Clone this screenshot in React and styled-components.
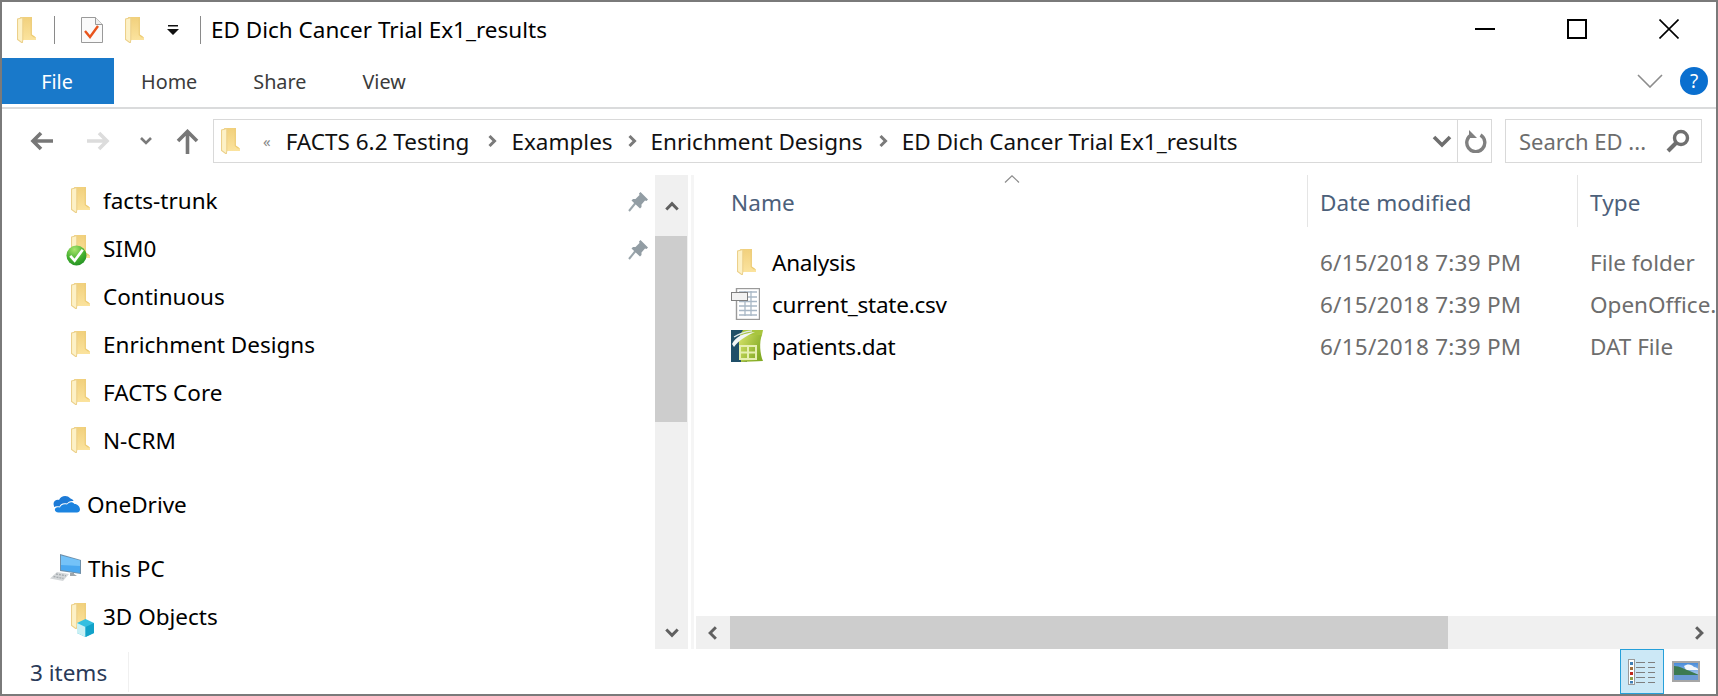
import React from 'react';
import styled, { createGlobalStyle } from 'styled-components';

const Global = createGlobalStyle`
    html, body { margin: 0; padding: 0; background: #fff; }
    body { font-family: "Noto Sans", "Open Sans", sans-serif; }
    * { box-sizing: border-box; }
`

const Win = styled.div`
    width: 1718px;
    height: 696px;
    border: 2px solid #7a7a7a;
    display: flex;
    flex-direction: column;
    overflow: hidden;
    background: #fff;
    color: #000;
`

const TitleBar = styled.div`
    height: 56px;
    display: flex;
    align-items: center;
    flex: none;
    padding-right: 1px;
`

const QuickIcons = styled.div`
    display: flex;
    align-items: center;
    padding-left: 15px;
`

const Gap = styled.div`
    width: ${p => p.$w}px;
    flex: none;
`

const TitleSep = styled.div`
    width: 1px;
    height: 28px;
    background: #8a8a8a;
    margin-left: ${p => p.$left}px;
`

const Title = styled.div`
    font-size: 22.5px;
    margin-left: 10px;
    flex: 1;
    position: relative;
    top: -1px;
`

const WinButton = styled.div`
    width: 92px;
    height: 56px;
    display: flex;
    align-items: center;
    justify-content: center;
    position: relative;
    top: -1px;
`

const Ribbon = styled.div`
    height: 51px;
    flex: none;
    display: flex;
    border-bottom: 2px solid #dadbdc;
    padding-bottom: 3px;
`

const FileTab = styled.div`
    width: 112px;
    background: #1979ca;
    color: #fff;
    font-size: 19.8px;
    display: flex;
    align-items: center;
    justify-content: center;
    padding-right: 2px;
`

const Tab = styled.div`
    font-size: 19.8px;
    color: #3b3b3b;
    display: flex;
    align-items: center;
    margin-left: ${p => p.$left}px;
`

const RibbonRight = styled.div`
    margin-left: auto;
    display: flex;
    align-items: center;
    gap: 17px;
    padding-right: 8px;
`

const HelpBadge = styled.div`
    width: 28px;
    height: 28px;
    border-radius: 50%;
    background: #0a6fcf;
    color: #fff;
    font-size: 19px;
    display: flex;
    align-items: center;
    justify-content: center;
`

const NavBar = styled.div`
    height: 66px;
    flex: none;
    display: flex;
    align-items: flex-start;
    padding-top: 10px;
    padding-right: 12px;
`

const NavButtons = styled.div`
    width: 211px;
    height: 44px;
    display: flex;
    align-items: center;
    padding-left: 28px;
`

const AddressBox = styled.div`
    width: 1279px;
    height: 44px;
    border: 1px solid #d9d9d9;
    display: flex;
    align-items: center;
    padding-left: 7px;
`

const Crumbs = styled.div`
    flex: 1;
    display: flex;
    align-items: center;
    font-size: 22.5px;
    color: #111;
    min-width: 0;
`

const Crumb = styled.span`
    white-space: nowrap;
`

const Overflow = styled.span`
    margin: 0 15px 0 23px;
    font-size: 15px;
    color: #888;
`

const CrumbSep = styled.span`
    display: flex;
    margin: 0 12px 0 ${p => p.$left}px;
`

const DropArrow = styled.span`
    display: flex;
    margin-right: 5px;
`

const RefreshBox = styled.div`
    width: 34px;
    height: 42px;
    border-left: 1px solid #d9d9d9;
    display: flex;
    align-items: center;
    justify-content: center;
    padding-left: 3px;
`

const SearchBox = styled.div`
    width: 197px;
    height: 44px;
    margin-left: 13px;
    border: 1px solid #d9d9d9;
    display: flex;
    align-items: center;
    justify-content: space-between;
    padding: 0 11px 0 13px;
    font-size: 22px;
    color: #6d6d6d;
`

const Body = styled.div`
    flex: 1;
    display: flex;
    min-height: 0;
`

const Side = styled.div`
    width: 653px;
    flex: none;
    position: relative;
    overflow: hidden;
    padding-top: 1px;
`

const SideRow = styled.div`
    height: 48px;
    display: flex;
    align-items: center;
    font-size: 22.5px;
    padding-left: ${p => p.$left}px;
    margin-top: ${p => p.$top || 0}px;
    position: relative;
`

const SideIcon = styled.div`
    width: ${p => p.$w}px;
    display: flex;
    position: relative;
    flex: none;
`

const PinWrap = styled.div`
    position: absolute;
    left: 626px;
    top: 12px;
`

const CheckWrap = styled.div`
    position: absolute;
    left: -5px;
    top: 7px;
`

const CubeWrap = styled.div`
    position: absolute;
    left: 6px;
    top: 10px;
`

const VScroll = styled.div`
    width: 33px;
    flex: none;
    background: #f0f0f0;
    display: flex;
    flex-direction: column;
`

const ScrollBtn = styled.div`
    height: ${p => p.$h}px;
    flex: none;
    display: flex;
    align-items: center;
    justify-content: center;
`

const VThumb = styled.div`
    height: 186px;
    flex: none;
    width: 32px;
    background: #cdcdcd;
`

const Spacer = styled.div`
    flex: 1;
`

const Divider = styled.div`
    width: 3px;
    margin-left: 3px;
    flex: none;
    background: #f5f5f5;
`

const Content = styled.div`
    flex: 1;
    min-width: 0;
    display: flex;
    flex-direction: column;
    margin-left: 2px;
`

const ListArea = styled.div`
    flex: 1;
    overflow: hidden;
    position: relative;
`

const SortCaret = styled.div`
    position: absolute;
    left: 308px;
    top: 0;
    display: flex;
`

const HeadRow = styled.div`
    display: grid;
    grid-template-columns: 612px 270px 200px;
    height: 52px;
`

const HeadCell = styled.div`
    font-size: 22.5px;
    letter-spacing: 0.1px;
    color: #4c607a;
    padding-left: ${p => p.$left}px;
    border-right: ${p => p.$line ? '1px solid #e5e5e5' : 'none'};
    display: flex;
    align-items: center;
    padding-top: 2px;
`

const Rows = styled.div`
    padding-top: 14px;
`

const Row = styled.div`
    display: grid;
    grid-template-columns: 612px 270px 1fr;
    height: 42px;
    align-items: center;
    font-size: 22.5px;
    white-space: nowrap;
`

const NameCell = styled.div`
    display: flex;
    align-items: center;
    padding-left: 35px;
    letter-spacing: -0.25px;
`

const RowIcon = styled.div`
    width: 41px;
    flex: none;
    display: flex;
    padding-left: ${p => p.$pad || 0}px;
`

const MutedCell = styled.div`
    color: #6d6d6d;
    padding-left: 12px;
    letter-spacing: ${p => p.$spacing}px;
`

const HScroll = styled.div`
    height: 33px;
    flex: none;
    background: #f0f0f0;
    display: flex;
`

const HBtn = styled.div`
    width: 34px;
    flex: none;
    display: flex;
    align-items: center;
    justify-content: center;
`

const HThumb = styled.div`
    width: 718px;
    flex: none;
    background: #cdcdcd;
`

const StatusBar = styled.div`
    height: 45px;
    flex: none;
    display: flex;
    align-items: stretch;
    font-size: 22.5px;
    color: #2a3a58;
    padding-right: 8px;
`

const StatusText = styled.div`
    width: 127px;
    padding-left: 28px;
    display: flex;
    align-items: center;
    height: 40px;
    margin-top: 3px;
    border-right: 1px solid #f0f0f0;
`

const ViewButton = styled.div`
    width: 44px;
    height: 45px;
    display: flex;
    align-items: center;
    justify-content: center;
    background: ${p => p.$on ? '#cce8f6' : 'transparent'};
    border: ${p => p.$on ? '1px solid #26a0da' : 'none'};
`

function Folder() {
    return (
        <svg width="19" height="26" viewBox="0 0 18 26" preserveAspectRatio="none">
            <defs>
                <linearGradient id="fb" x1="0" y1="0" x2="0" y2="1">
                    <stop offset="0" stopColor="#f1d07c" />
                    <stop offset="1" stopColor="#fbe39e" />
                </linearGradient>
            </defs>
            <path d="M3 0H14V17.5L18 20.5V23H3Z" fill="url(#fb)" />
            <path d="M14 0V17.5L18 20.5H16L13 18V0Z" fill="#eccb74" />
            <path d="M0.5 2L5.5 0.5V23L5 26L0.5 22.5Z" fill="#fdf1c6" stroke="#ecd08a" strokeWidth="1" />
        </svg>
    );
}

function Check() {
    return (
        <svg width="21" height="21" viewBox="0 0 22 22">
            <defs>
                <radialGradient id="gc" cx="0.4" cy="0.2" r="0.9">
                    <stop offset="0" stopColor="#a9e56d" />
                    <stop offset="0.55" stopColor="#45b02f" />
                    <stop offset="1" stopColor="#1c8a22" />
                </radialGradient>
            </defs>
            <circle cx="11" cy="11" r="10.5" fill="url(#gc)" />
            <path d="M4.5 11.5L9 16.5L17.5 5" fill="none" stroke="#fff" strokeWidth="2.8" />
        </svg>
    );
}

function Pin() {
    return (
        <svg width="21" height="21" viewBox="0 0 21 21">
            <path d="M1 20L7.5 12" stroke="#9aa5ab" strokeWidth="2" />
            <path d="M12.5 1L20 8.5L18.5 10L17 9.5L13.5 13.5L13.5 16L12 17.5L3.5 9.5L5 8L7.5 8L11.5 4L11 2.5Z" fill="#929da4" />
        </svg>
    );
}

function Chevron({ dir = 'down', size = 14, color = '#606060', sw = 2.6 }) {
    const d = { down: 'M2 4L7 9L12 4', up: 'M2 10L7 5L12 10', left: 'M9.5 2L4.5 7L9.5 12', right: 'M4.5 2L9.5 7L4.5 12' }[dir];
    return (
        <svg width={size} height={size} viewBox="0 0 14 14">
            <path d={d} fill="none" stroke={color} strokeWidth={sw} />
        </svg>
    );
}

function Arrow({ dir = 'left', color = '#777' }) {
    if (dir === 'up') {
        return (
            <svg width="23" height="25" viewBox="0 0 23 25">
                <path d="M11.5 25V3M2 12L11.5 2.5L21 12" fill="none" stroke={color} strokeWidth="3.6" />
            </svg>
        );
    }
    const d = dir === 'left' ? 'M23 10H3M11 2L3 10L11 18' : 'M0 10H20M12 2L20 10L12 18';
    return (
        <svg width="23" height="20" viewBox="0 0 23 20">
            <path d={d} fill="none" stroke={color} strokeWidth="3.6" />
        </svg>
    );
}

function CsvIcon() {
    return (
        <svg width="29" height="32" viewBox="0 0 29 32">
            <rect x="5.5" y="0.5" width="23" height="31" fill="#fff" stroke="#9a9a9a" strokeWidth="1.4" />
            <path d="M8 4H26M8 9H26M8 13.5H26M8 18H26M8 22.5H26M8 27H26M14 3V28M20 3V28" stroke="#a9b8c6" strokeWidth="1.3" fill="none" />
            <rect x="0.5" y="4.5" width="16" height="8" fill="#f2f2f2" stroke="#7f7f7f" />
        </svg>
    );
}

function OfficeIcon() {
    return (
        <svg width="32" height="32" viewBox="0 0 32 32">
            <defs>
                <linearGradient id="og" x1="0" y1="0" x2="1" y2="0.5">
                    <stop offset="0" stopColor="#d6e268" />
                    <stop offset="1" stopColor="#83ab25" />
                </linearGradient>
            </defs>
            <path d="M0 0H16V32H0Z" fill="#1f4f68" />
            <path d="M9 5H31C28 12 29 24 32 31L10 32C10 22 6 13 9 5Z" fill="url(#og)" />
            <path d="M12 0H32L31 5H9Z" fill="#a8c53f" />
            <path d="M1 14C5 6 13 3.5 24 2C15 6 8 10 3 17Z" fill="#f2f6f6" />
            <path d="M3 7C9 3 15 1.5 21 0.8" stroke="#e2eaec" strokeWidth="1.2" fill="none" />
            <path d="M9 16H25V29H9Z M17 16V29 M9 22.5H25" fill="none" stroke="#e6efb0" strokeWidth="2" />
        </svg>
    );
}

function CloudIcon() {
    return (
        <svg width="28" height="18" viewBox="0 0 28 18">
            <path d="M2 11C0 6 5 4 7 5C9 0.5 15 -0.5 18.5 3.5C20 4 21 4.5 21.5 6C18 5.5 16 7 15 8.5C11 7.5 8 9 7.5 11.5C5 11 3.5 11 2 12Z" fill="#1c7ad6" />
            <path d="M6.5 17.5C3.5 17.5 2.5 15.5 3 14C3.5 12.5 5.5 12 8 12.5C8.5 10 11.5 8.5 15 9.5C16.5 7 20.5 6 22.5 9C25.5 9 28 11.5 28 14.5C28 16.5 26.5 17.5 25 17.5Z" fill="#1c84e0" />
        </svg>
    );
}

function PcIcon() {
    return (
        <svg width="32" height="28" viewBox="0 0 32 28">
            <path d="M10 0L31 6V20L10 17Z" fill="#6f8fa8" />
            <path d="M11 1.5L30 6.5V19L11 16Z" fill="#4aa8f0" />
            <path d="M11 1.5L30 6.5V12L11 11Z" fill="#86cdfb" opacity="0.7" />
            <path d="M20 19V22H27L24 20V19Z" fill="#9fa6ab" />
            <path d="M7 18L19 20L13 27L0 24.5Z" fill="#d5d8da" />
            <path d="M6 20L16 21.8M3.5 22.5L13.5 24.5" stroke="#a6acb0" strokeWidth="1.4" strokeDasharray="2 1" />
        </svg>
    );
}

function Cube() {
    return (
        <svg width="17" height="18" viewBox="0 0 17 18">
            <path d="M8.5 0L17 4V14L8.5 18L0 14V4Z" fill="#35bfe0" />
            <path d="M0 4L8.5 8V18L0 14Z" fill="#c9f0f4" />
            <path d="M8.5 8L17 4V14L8.5 18Z" fill="#12a2c9" />
        </svg>
    );
}

function ChecklistIcon() {
    return (
        <svg width="22" height="26" viewBox="0 0 22 26">
            <path d="M0.5 0.5H14.5L21.5 7.5V25.5H0.5Z" fill="#fafafa" stroke="#9a9a9a" />
            <path d="M14.5 0.5V7.5H21.5" fill="#eee" stroke="#9a9a9a" />
            <path d="M4 14L9 20L17 9" fill="none" stroke="#e8541c" strokeWidth="2.4" />
        </svg>
    );
}

function DetailsIcon() {
    return (
        <svg width="28" height="26" viewBox="0 0 28 26">
            <rect x="0.5" y="0.5" width="6" height="25" fill="#fff" stroke="#999" />
            <rect x="2" y="3" width="3" height="3" fill="#3f7fb5" />
            <rect x="2" y="8" width="3" height="3" fill="#a0703f" />
            <rect x="2" y="13" width="3" height="3" fill="#c0281c" />
            <rect x="2" y="18" width="3" height="3" fill="#8da04a" />
            <rect x="2" y="22" width="3" height="2.5" fill="#3f7fb5" />
            <path d="M8 3.5H17M20 3.5H27M8 8.5H17M20 8.5H27M8 13.5H17M20 13.5H27M8 18.5H17M20 18.5H27M8 23.5H17M20 23.5H27" stroke="#7f7f7f" strokeWidth="1.2" />
        </svg>
    );
}

function PreviewIcon() {
    return (
        <svg width="28" height="21" viewBox="0 0 28 21">
            <defs>
                <linearGradient id="sky" x1="0" y1="0" x2="0" y2="1">
                    <stop offset="0" stopColor="#3f86d8" />
                    <stop offset="1" stopColor="#dbe9f7" />
                </linearGradient>
            </defs>
            <rect x="1" y="1" width="26" height="19" fill="url(#sky)" stroke="#a6a6a6" strokeWidth="2" />
            <path d="M12 5C15 2.5 20 3 22 6C24 6 25 7 26 8V9H14Z" fill="#f4f8fc" />
            <path d="M2 5C8 5 12 8 26 13.5V14H2Z" fill="#3c7a52" />
            <path d="M2 14H26V19H2Z" fill="#6a9ad4" />
        </svg>
    );
}

const sideItems = [
    { name: 'facts-trunk', pin: true },
    { name: 'SIM0', pin: true, check: true },
    { name: 'Continuous' },
    { name: 'Enrichment Designs' },
    { name: 'FACTS Core' },
    { name: 'N-CRM' },
];

const files = [
    { name: 'Analysis', type: 'File folder', icon: <Folder />, pad: 6 },
    { name: 'current_state.csv', type: 'OpenOffice.', icon: <CsvIcon /> },
    { name: 'patients.dat', type: 'DAT File', icon: <OfficeIcon /> },
];

const crumbs = ['FACTS 6.2 Testing', 'Examples', 'Enrichment Designs', 'ED Dich Cancer Trial Ex1_results'];
const sepLeft = [0, 16, 12, 13];

export default function App() {
    return (
        <Win>
            <Global />
            <TitleBar>
                <QuickIcons>
                    <Folder />
                    <TitleSep $left={18} />
                    <Gap $w={26} />
                    <ChecklistIcon />
                    <Gap $w={22} />
                    <Folder />
                    <Gap $w={23} />
                    <svg width="12" height="10" viewBox="0 0 12 10"><path d="M1 0H11V1.5H1ZM0 4H12L6 10Z" fill="#111" /></svg>
                    <TitleSep $left={21} />
                </QuickIcons>
                <Title>ED Dich Cancer Trial Ex1_results</Title>
                <WinButton><svg width="20" height="2"><rect width="20" height="2" fill="#000" /></svg></WinButton>
                <WinButton><svg width="20" height="20"><rect x="1" y="1" width="18" height="18" fill="none" stroke="#000" strokeWidth="2" /></svg></WinButton>
                <WinButton><svg width="20" height="20"><path d="M0.5 0.5L19.5 19.5M19.5 0.5L0.5 19.5" stroke="#000" strokeWidth="1.6" /></svg></WinButton>
            </TitleBar>
            <Ribbon>
                <FileTab>File</FileTab>
                <Tab $left={27}>Home</Tab>
                <Tab $left={56}>Share</Tab>
                <Tab $left={56}>View</Tab>
                <RibbonRight>
                    <svg width="26" height="14" viewBox="0 0 26 14"><path d="M1 1L13 13L25 1" fill="none" stroke="#8c8c8c" strokeWidth="1.6" /></svg>
                    <HelpBadge>?</HelpBadge>
                </RibbonRight>
            </Ribbon>
            <NavBar>
                <NavButtons>
                    <Arrow dir="left" />
                    <Gap $w={34} />
                    <Arrow dir="right" color="#dcdcdc" />
                    <Gap $w={29} />
                    <Chevron dir="down" size={14} color="#7a7a7a" />
                    <Gap $w={23} />
                    <Arrow dir="up" />
                </NavButtons>
                <AddressBox>
                    <Crumbs>
                        <Folder />
                        <Overflow>«</Overflow>
                        {crumbs.map((c, i) => (
                            <React.Fragment key={c}>
                                {i > 0 && <CrumbSep $left={sepLeft[i]}><Chevron dir="right" size={14} color="#7a7a7a" sw={3} /></CrumbSep>}
                                <Crumb>{c}</Crumb>
                            </React.Fragment>
                        ))}
                    </Crumbs>
                    <DropArrow><svg width="20" height="14" viewBox="0 0 20 14"><path d="M2 3L10 11L18 3" fill="none" stroke="#6e6e6e" strokeWidth="3.6" /></svg></DropArrow>
                    <RefreshBox>
                        <svg width="22" height="24" viewBox="0 0 22 24"><path d="M7 5.5A9 9 0 1 0 15.5 6" fill="none" stroke="#808080" strokeWidth="3.4" /><path d="M4 1V9H12Z" fill="#808080" /></svg>
                    </RefreshBox>
                </AddressBox>
                <SearchBox>
                    <span>Search ED ...</span>
                    <svg width="24" height="24" viewBox="0 0 24 24"><circle cx="15" cy="9" r="6.5" fill="none" stroke="#6f6f6f" strokeWidth="3.4" /><path d="M10 14L2 22" stroke="#6f6f6f" strokeWidth="4" /></svg>
                </SearchBox>
            </NavBar>
            <Body>
                <Side>
                    {sideItems.map(it => (
                        <SideRow key={it.name} $left={69}>
                            <SideIcon $w={32}>
                                <Folder />
                                {it.check && <CheckWrap><Check /></CheckWrap>}
                            </SideIcon>
                            {it.name}
                            {it.pin && <PinWrap><Pin /></PinWrap>}
                        </SideRow>
                    ))}
                    <SideRow $left={50} $top={16}>
                        <SideIcon $w={35}><CloudIcon /></SideIcon>
                        OneDrive
                    </SideRow>
                    <SideRow $left={48} $top={16}>
                        <SideIcon $w={38}><PcIcon /></SideIcon>
                        This PC
                    </SideRow>
                    <SideRow $left={69}>
                        <SideIcon $w={32}>
                            <Folder />
                            <CubeWrap><Cube /></CubeWrap>
                        </SideIcon>
                        3D Objects
                    </SideRow>
                </Side>
                <VScroll>
                    <ScrollBtn $h={61}><Chevron dir="up" size={16} /></ScrollBtn>
                    <VThumb />
                    <Spacer />
                    <ScrollBtn $h={32}><Chevron dir="down" size={16} /></ScrollBtn>
                </VScroll>
                <Divider />
                <Content>
                    <ListArea>
                        <SortCaret>
                            <svg width="16" height="8" viewBox="0 0 16 8"><path d="M1 7.5L8 0.8L15 7.5" fill="none" stroke="#8c8c8c" strokeWidth="1.2" /></svg>
                        </SortCaret>
                        <HeadRow>
                            <HeadCell $left={35} $line>Name</HeadCell>
                            <HeadCell $left={12} $line>Date modified</HeadCell>
                            <HeadCell $left={12}>Type</HeadCell>
                        </HeadRow>
                        <Rows>
                            {files.map(f => (
                                <Row key={f.name}>
                                    <NameCell>
                                        <RowIcon $pad={f.pad}>{f.icon}</RowIcon>
                                        {f.name}
                                    </NameCell>
                                    <MutedCell $spacing={0.25}>6/15/2018 7:39 PM</MutedCell>
                                    <MutedCell $spacing={0}>{f.type}</MutedCell>
                                </Row>
                            ))}
                        </Rows>
                    </ListArea>
                    <HScroll>
                        <HBtn><Chevron dir="left" size={16} /></HBtn>
                        <HThumb />
                        <Spacer />
                        <HBtn><Chevron dir="right" size={16} /></HBtn>
                    </HScroll>
                </Content>
            </Body>
            <StatusBar>
                <StatusText>3 items</StatusText>
                <Spacer />
                <ViewButton $on><DetailsIcon /></ViewButton>
                <ViewButton><PreviewIcon /></ViewButton>
            </StatusBar>
        </Win>
    );
}
